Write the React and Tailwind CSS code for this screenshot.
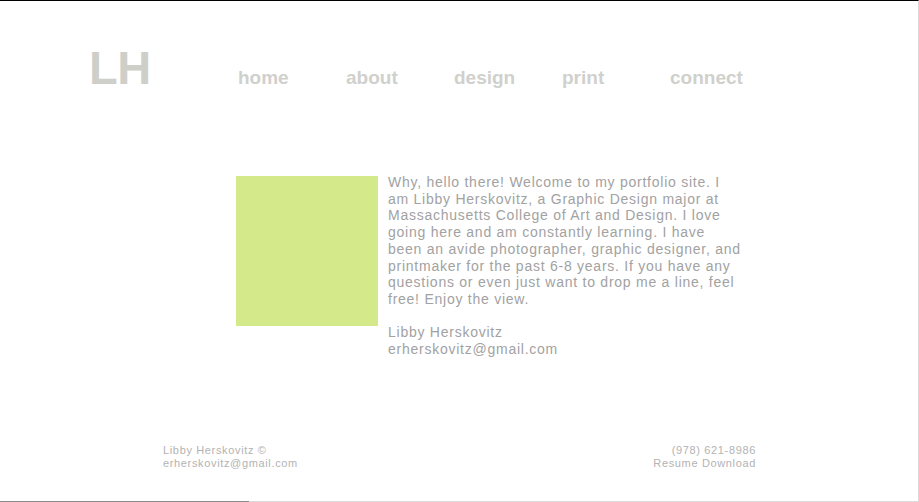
const nav = ['home', 'about', 'design', 'print', 'connect'];

const bio = [
  'Why, hello there! Welcome to my portfolio site. I',
  'am Libby Herskovitz, a Graphic Design major at',
  'Massachusetts College of Art and Design. I love',
  'going here and am constantly learning. I have',
  'been an avide photographer, graphic designer, and',
  'printmaker for the past 6-8 years. If you have any',
  'questions or even just want to drop me a line, feel',
  'free! Enjoy the view.',
];

export default function App() {
  return (
    <div className="w-[919px] h-[502px] bg-white border-t border-t-black border-r border-r-[#d9d9d9] flex flex-col font-['Liberation_Sans',Arial,sans-serif]">
      {/* header */}
      <header className="flex items-baseline pt-[43px] pl-[89px]">
        <div className="w-[149px] text-[47px] leading-none font-bold text-[#cfcfca] tracking-[-0.5px]">LH</div>
        <nav className="flex">
          {nav.map((item) => (
            <a key={item} href="#" className="w-[108px] text-[19px] font-bold text-[#d0d0cd] leading-none">
              {item}
            </a>
          ))}
        </nav>
      </header>

      {/* intro */}
      <section className="flex items-start mt-[83px] ml-[236px]">
        <div className="w-[142px] h-[150px] mt-[2px] bg-[#d4e98a]" />
        <div className="ml-[10px] text-[14px] leading-[16.7px] text-[#a2a2a2] tracking-[0.75px]">
          <p>
            {bio.map((line, i) => (
              <span key={i} className="block">{line}</span>
            ))}
          </p>
          <p className="mt-[16.7px]">
            Libby Herskovitz
            <br />
            erherskovitz@gmail.com
          </p>
        </div>
      </section>

      {/* footer */}
      <footer className="mt-auto mb-[31px] ml-[163px] w-[593px] flex justify-between text-[11px] leading-[13px] text-[#b3b3b3] tracking-[0.65px]">
        <div>
          <p>Libby Herskovitz ©</p>
          <p>erherskovitz@gmail.com</p>
        </div>
        <div className="text-right">
          <p>(978) 621-8986</p>
          <p>Resume Download</p>
        </div>
      </footer>
      <div className="flex h-px">
        <div className="w-[249px] bg-[#8a8a8a]" />
        <div className="flex-1 bg-[#dcdcdc]" />
      </div>
    </div>
  );
}
